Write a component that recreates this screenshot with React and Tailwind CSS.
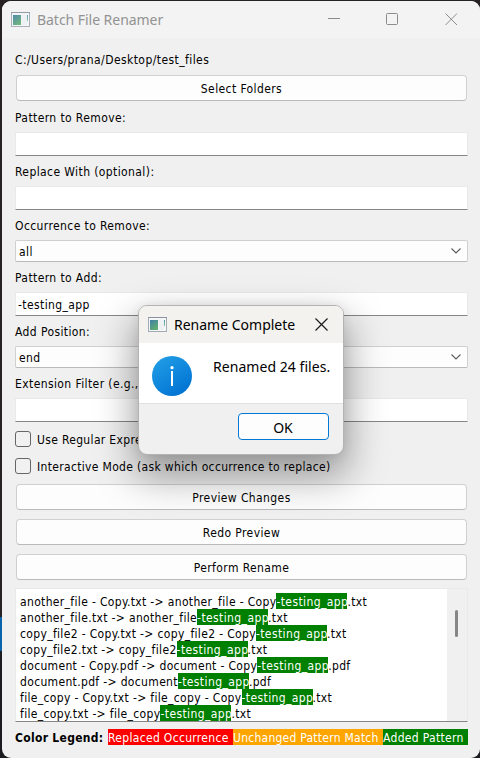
const tahoma = "font-['DejaVu_Sans_Condensed','DejaVu_Sans',sans-serif] [font-stretch:condensed]";
const segoe = "font-['Noto_Sans',sans-serif] tracking-normal";

function AppIcon({ className = '' }) {
  return (
    <svg className={className} width="20" height="16" viewBox="0 0 20 16" shapeRendering="crispEdges">
      <defs>
        <linearGradient id="pane" x1="0" y1="0" x2="0.6" y2="1">
          <stop offset="0" stopColor="#417fa8" />
          <stop offset="1" stopColor="#5fae72" />
        </linearGradient>
        <linearGradient id="sliver" x1="0" y1="0" x2="0" y2="1">
          <stop offset="0" stopColor="#4f93b0" />
          <stop offset="1" stopColor="#8cc79a" />
        </linearGradient>
      </defs>
      <rect x="0.5" y="0.5" width="18" height="14" fill="#f4f6f8" stroke="#a3aab4" />
      <rect x="0" y="0" width="19" height="1" fill="#8a929e" />
      <rect x="2" y="3" width="8" height="10" fill="url(#pane)" />
      <rect x="11" y="3" width="5" height="10" fill="#eef1f3" />
      <rect x="16" y="3" width="1" height="6" fill="url(#sliver)" />
    </svg>
  );
}

function Label({ children, className }) {
  return <div className={`flex h-4 items-center whitespace-pre ${className}`}>{children}</div>;
}

function Input({ value, className }) {
  return (
    <div className={`flex h-6 items-center border border-[#e9e9e9] border-b-[#868686] bg-white pt-0.5 pl-0.5 whitespace-pre ${className}`}>
      {value}
    </div>
  );
}

function Select({ value, className }) {
  return (
    <div className={`flex h-[22px] items-center justify-between rounded-[2px] border border-[#d0d0d0] border-b-[#bababa] bg-[#fdfdfd] pr-1.5 pl-[3px] ${className}`}>
      <span className="pt-0.5">{value}</span>
      <svg width="10" height="6" viewBox="0 0 10 6" fill="none" stroke="#5c5c5c" strokeWidth="1.1">
        <path d="M0.5 0.5 5 5 9.5 0.5" />
      </svg>
    </div>
  );
}

function Button({ children, className }) {
  return (
    <button className={`mx-px flex h-[26px] items-center justify-center rounded-[4px] border border-[#d0d0d0] border-b-[#bababa] bg-[#fdfdfd] pt-0.5 tracking-[0.4px] ${className}`}>
      {children}
    </button>
  );
}

function Checkbox({ children, className }) {
  return (
    <label className={`flex h-4 items-center gap-1.5 whitespace-pre ${className}`}>
      <span className="size-4 rounded-[3px] border border-[#666] bg-[#f3f3f3]/40" />
      <span className="pt-0.5 tracking-[0.33px]">{children}</span>
    </label>
  );
}

const files = [
  ['another_file - Copy.txt', 'another_file - Copy', '.txt'],
  ['another_file.txt', 'another_file', '.txt'],
  ['copy_file2 - Copy.txt', 'copy_file2 - Copy', '.txt'],
  ['copy_file2.txt', 'copy_file2', '.txt'],
  ['document - Copy.pdf', 'document - Copy', '.pdf'],
  ['document.pdf', 'document', '.pdf'],
  ['file_copy - Copy.txt', 'file_copy - Copy', '.txt'],
  ['file_copy.txt', 'file_copy', '.txt'],
];

function Dialog() {
  return (
    <div className={`absolute top-[305px] left-[138px] flex h-[150px] w-[206px] flex-col overflow-hidden rounded-[9px] border border-[#b3b3b3] bg-[#f0f0f0] text-black shadow-[0_18px_38px_4px_rgba(0,0,0,0.36),0_1px_12px_rgba(0,0,0,0.08)] ${segoe}`}>
      <div className="flex h-[37px] shrink-0 items-center bg-[#f4f2ee] pl-[9px]">
        <AppIcon />
        <span className="ml-1.5 w-[122px] text-[14px] whitespace-pre">Rename Complete</span>
        <svg className="ml-[19px]" width="13" height="13" viewBox="0 0 13 13" stroke="#1b1b1b" strokeWidth="1.2">
          <path d="M0.5 0.5 12.5 12.5M12.5 0.5 0.5 12.5" />
        </svg>
      </div>
      <div className="flex h-[60px] shrink-0 bg-white pt-[13px] pl-[13px]">
        <svg width="40" height="40" viewBox="0 0 40 40">
          <defs>
            <linearGradient id="info" x1="0.15" y1="0" x2="0.8" y2="1">
              <stop offset="0" stopColor="#219ee6" />
              <stop offset="1" stopColor="#0071d2" />
            </linearGradient>
          </defs>
          <circle cx="20" cy="20" r="20" fill="url(#info)" />
          <circle cx="20" cy="11.7" r="1.6" fill="#fff" />
          <rect x="19" y="15" width="2" height="15" fill="#fff" />
        </svg>
        <span className="mt-px ml-[21px] h-5 text-[14px] leading-5 tracking-[0.05px] whitespace-pre">Renamed 24 files.</span>
      </div>
      <div className="flex grow justify-end border-t border-[#dfdfdf] pt-[9px] pr-3.5">
        <button className="flex h-[27px] w-[91px] items-center justify-center rounded-[4px] border border-[#0078d4] bg-[#fdfdfd] pt-0.5 pr-px text-[14px]">OK</button>
      </div>
    </div>
  );
}

export default function App() {
  return (
    <div className={`relative h-[758px] w-[480px] overflow-hidden bg-[linear-gradient(#262223_0_617px,#0a64ad_617px_651px,#1b1c20_651px)] pt-px pl-0.5 text-[12px] leading-4 text-black ${tahoma}`}>
      <div className="h-[757px] overflow-hidden rounded-[9px] bg-[#f0f0f0]">
        <header className={`flex h-[37px] items-center bg-[#f3f3f3] pl-[9px] text-[#929292] ${segoe}`}>
          <AppIcon className="opacity-90" />
          <span className="ml-1.5 grow text-[14px] tracking-[-0.04px] whitespace-pre">Batch File Renamer</span>
          <svg className="mr-[22px]" width="130" height="13" viewBox="0 0 130 13" fill="none" stroke="#8c8c8c">
            <path d="M0 5.5H12" />
            <rect x="58.5" y="0.5" width="11" height="11" rx="1" />
            <path d="M117.5 0.5 129 12M129 0.5 117.5 12" />
          </svg>
        </header>

        <main className="flex w-[466px] flex-col pl-[13px] tracking-[0.4px]">
          <Label className="mt-3.5 tracking-[0.43px]">C:/Users/prana/Desktop/test_files</Label>
          <Button className="mt-[7px]">Select Folders</Button>
          <Label className="mt-[9px]">Pattern to Remove:</Label>
          <Input className="mt-[6px]" />
          <Label className="mt-2">Replace With (optional):</Label>
          <Input className="mt-[6px]" />
          <Label className="mt-2">Occurrence to Remove:</Label>
          <Select className="mt-[6px]" value="all" />
          <Label className="mt-2">Pattern to Add:</Label>
          <Input className="mt-[6px]" value="-testing_app" />
          <Label className="mt-2">Add Position:</Label>
          <Select className="mt-[6px]" value="end" />
          <Label className="mt-2">Extension Filter (e.g., .txt):</Label>
          <Input className="mt-[6px]" />
          <Checkbox className="mt-[9px]">Use Regular Expressions</Checkbox>
          <Checkbox className="mt-[11px]">Interactive Mode (ask which occurrence to replace)</Checkbox>
          <Button className="mt-[10px]">Preview Changes</Button>
          <Button className="mt-[9px]">Redo Preview</Button>
          <Button className="mt-[9px]">Perform Rename</Button>

          <div className="mt-2 flex h-[134px] overflow-hidden border border-[#e9e9e9] border-b-[#868686] bg-white">
            <div className="grow pt-1 pl-1">
              {files.map(([from, stem, ext]) => (
                <div key={from} className="flex h-4 leading-[18px] tracking-[0.34px] whitespace-pre">
                  <span>{from} -&gt; {stem}</span>
                  <span className="w-[71px] bg-[#008000] tracking-[0.4px] text-white">-testing_app</span>
                  <span>{ext}</span>
                </div>
              ))}
            </div>
            <div className="flex w-5 justify-center bg-[#f0f0f0] pt-[21px] pr-px">
              <div className="h-[27px] w-[3px] rounded-full bg-[#868686]" />
            </div>
          </div>

          <div className="mt-[7px] flex h-4 leading-[18px] whitespace-pre">
            <b className="w-[93px] tracking-[0.3px]">Color Legend: </b>
            <span className="w-[125px] bg-[#ff0000] tracking-[0.32px] text-white">Replaced Occurrence</span>
            <span className="w-[150px] bg-[#ffa500] tracking-[0.25px] text-white">Unchanged Pattern Match</span>
            <span className="w-[85px] bg-[#008000] tracking-[0.32px] text-white">Added Pattern</span>
          </div>
        </main>
      </div>
      <Dialog />
    </div>
  );
}
